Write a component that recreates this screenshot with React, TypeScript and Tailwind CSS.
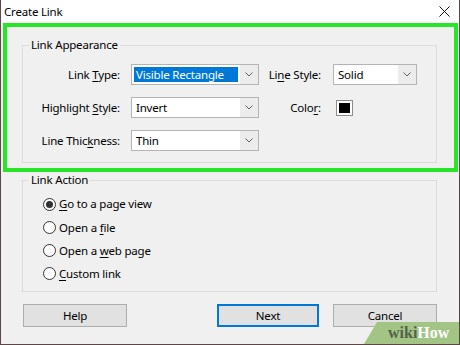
import type { ReactNode } from "react";

function Combo({
  value,
  width,
  selected = false,
}: {
  value: string;
  width: string;
  selected?: boolean;
}) {
  return (
    <div
      className={`flex h-[21px] ${width} border border-[#b4b4b4] bg-white`}
    >
      <div className="flex flex-1 items-center p-[2px]">
        {selected ? (
          <div className="flex h-full w-full items-center bg-[#0078d7] pl-[2px] text-white">
            {value}
          </div>
        ) : (
          <div className="pl-[2px]">{value}</div>
        )}
      </div>
      <div className="flex w-[18px] items-center justify-center bg-[#ececec]">
        <svg width="8" height="5" viewBox="0 0 8 5">
          <path d="M0.5 0.5 L4 4 L7.5 0.5" fill="none" stroke="#606060" strokeWidth="1" />
        </svg>
      </div>
    </div>
  );
}

function Label({ children, pr }: { children: ReactNode; pr: string }) {
  return <div className={`flex items-center justify-end ${pr}`}>{children}</div>;
}

function U({ children }: { children: ReactNode }) {
  return <span className="underline decoration-1 underline-offset-[2px]">{children}</span>;
}

function Radio({ checked, children }: { checked?: boolean; children: ReactNode }) {
  return (
    <div className="flex h-[20px] items-center gap-[3px]">
      <div className="flex h-[13px] w-[13px] items-center justify-center rounded-full border border-[#333] bg-white">
        {checked && <div className="h-[7px] w-[7px] rounded-full bg-[#333]" />}
      </div>
      <div>{children}</div>
    </div>
  );
}

function Btn({ children, def = false, ml }: { children: ReactNode; def?: boolean; ml: string }) {
  return (
    <button
      className={`flex h-[23px] items-center justify-center bg-[#e1e1e1] ${ml} ${
        def ? "w-[102px] border-2 border-[#0078d7]" : "w-[104px] border border-[#adadad]"
      }`}
    >
      {children}
    </button>
  );
}

export default function App() {
  return (
    <div className="relative h-[345px] w-[460px] overflow-hidden border-x border-b border-[#5d4646] bg-[#f0f0f0] font-['Noto_Sans',sans-serif] text-[11.5px] tracking-[-0.2px] text-black">
      {/* title bar */}
      <div className="flex h-[23px] items-center justify-between bg-white pl-[3px] pr-[9px]">
        <span>Create Link</span>
        <svg width="11" height="11" viewBox="0 0 11 11">
          <path d="M0.5 0.5 L10.5 10.5 M10.5 0.5 L0.5 10.5" stroke="#111" strokeWidth="1" />
        </svg>
      </div>

      {/* highlighted region */}
      <div className="ml-[2px] w-[455px] border-4 border-[#27e627] pb-[5px] pt-[10px]">
        <fieldset className="ml-[15px] w-[415px] border border-[#dcdcdc] pb-[11px] pt-[11px]">
          <legend className="ml-[6px] px-[2px] leading-[16px]">Link Appearance</legend>
          <div className="grid grid-cols-[108px_128px_74px_84px] grid-rows-[21px_21px_21px] gap-y-[12px]">
            <Label pr="pr-[11px]">
              <span>
                Link <U>T</U>ype:
              </span>
            </Label>
            <Combo value="Visible Rectangle" width="w-[128px]" selected />
            <Label pr="pr-[12px]">
              <span>
                Li<U>n</U>e Style:
              </span>
            </Label>
            <Combo value="Solid" width="w-[84px]" />

            <Label pr="pr-[11px]">
              <span>
                Highlight <U>S</U>tyle:
              </span>
            </Label>
            <Combo value="Invert" width="w-[128px]" />
            <Label pr="pr-[12px]">
              <span>
                Colo<U>r</U>:
              </span>
            </Label>
            <div className="flex items-center pl-[3px]">
              <div className="h-[16px] w-[17px] border border-[#8c8c8c] bg-white p-[2px]">
                <div className="h-full w-full bg-black" />
              </div>
            </div>

            <Label pr="pr-[11px]">
              <span>
                Line Thic<U>k</U>ness:
              </span>
            </Label>
            <Combo value="Thin" width="w-[128px]" />
          </div>
        </fieldset>
      </div>

      {/* link action */}
      <fieldset className="ml-[21px] w-[415px] border border-[#dcdcdc] pb-[7px] pl-[20px] pt-[6px]">
        <legend className="ml-[-14px] px-[2px] leading-[16px]">Link Action</legend>
        <div className="flex flex-col gap-[3.3px]">
          <Radio checked>
            <U>G</U>o to a page view
          </Radio>
          <Radio>
            Open a <U>f</U>ile
          </Radio>
          <Radio>
            Open a <U>w</U>eb page
          </Radio>
          <Radio>
            <U>C</U>ustom link
          </Radio>
        </div>
      </fieldset>

      {/* buttons */}
      <div className="mt-[12px] flex">
        <Btn ml="ml-[22px]">Help</Btn>
        <Btn ml="ml-[90px]" def>
          Next
        </Btn>
        <Btn ml="ml-[14px]">Cancel</Btn>
      </div>

      {/* watermark */}
      <div className="absolute bottom-0 right-0 h-[22px] w-[95px]">
        <svg className="absolute inset-0" width="95" height="22" viewBox="0 0 95 22">
          <polygon points="0,22 13,0 95,0 95,22" fill="#a2c585" />
        </svg>
        <div className="absolute bottom-[1px] left-[24px] font-['Liberation_Serif',serif] text-[16px] font-bold leading-[20px] tracking-normal">
          <span className="text-[#55624a]">wiki</span>
          <span className="text-white">How</span>
        </div>
      </div>
    </div>
  );
}
